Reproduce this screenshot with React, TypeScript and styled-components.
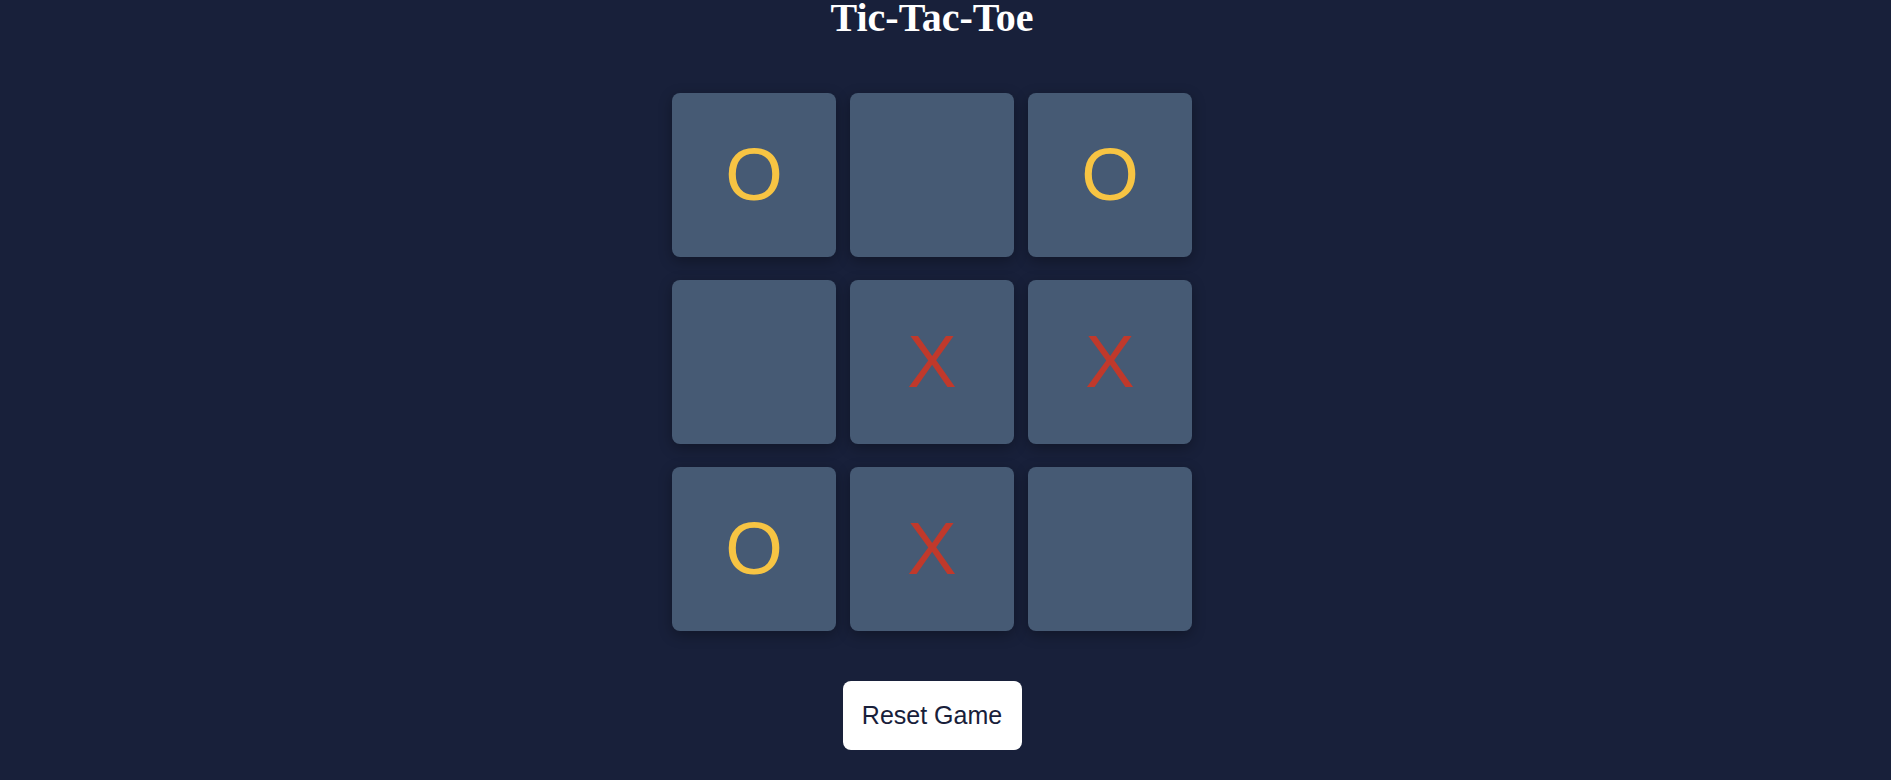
import React, { useState } from "react";
import styled, { createGlobalStyle } from "styled-components";

const GlobalStyle = createGlobalStyle`
  html, body {
    margin: 0;
    padding: 0;
    background: #18203a;
  }
  body {
    font-family: "Liberation Sans", Arial, sans-serif;
  }
`;

const Page = styled.div`
  min-height: 780px;
  display: flex;
  flex-direction: column;
  align-items: center;
  padding-right: 27px;
  box-sizing: border-box;
  background: #18203a;
`;

const Title = styled.h1`
  margin: 0;
  font-family: "Liberation Serif", "Times New Roman", serif;
  font-weight: 700;
  font-size: 40px;
  line-height: 36px;
  color: #ffffff;
`;

const Board = styled.div`
  margin-top: 57px;
  display: grid;
  grid-template-columns: repeat(3, 164px);
  grid-auto-rows: 164px;
  column-gap: 14px;
  row-gap: 23px;
`;

const Cell = styled.button<{ $mark: string }>`
  border: none;
  padding: 0;
  border-radius: 8px;
  background: #465a74;
  box-shadow: 0 4px 14px rgba(0, 0, 0, 0.3);
  display: flex;
  align-items: center;
  justify-content: center;
  font-family: "Liberation Sans", Arial, sans-serif;
  font-size: 74px;
  line-height: 1;
  color: ${(p) => (p.$mark === "X" ? "#c0392b" : "#f7c443")};
  cursor: pointer;
`;

const ResetButton = styled.button`
  margin-top: 50px;
  width: 179px;
  height: 69px;
  padding: 0;
  border: none;
  border-radius: 8px;
  background: #ffffff;
  color: #18203a;
  font-family: "Liberation Sans", Arial, sans-serif;
  font-size: 25px;
  cursor: pointer;
`;

const initial = ["O", "", "O", "", "X", "X", "O", "X", ""];

export default function App() {
  const [cells, setCells] = useState<string[]>(initial);
  return (
    <>
      <GlobalStyle />
      <Page>
        <Title>Tic-Tac-Toe</Title>
        <Board>
          {cells.map((c, i) => (
            <Cell key={i} $mark={c}>
              {c}
            </Cell>
          ))}
        </Board>
        <ResetButton onClick={() => setCells(Array(9).fill(""))}>Reset Game</ResetButton>
      </Page>
    </>
  );
}
